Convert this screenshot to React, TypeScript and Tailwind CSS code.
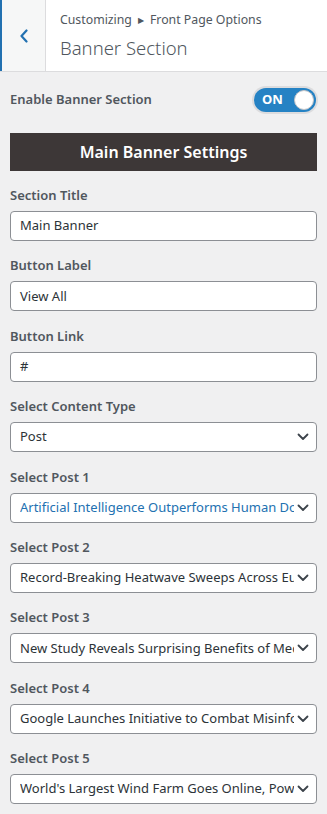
import React from "react";

const font = { fontFamily: '"Noto Sans", "Open Sans", sans-serif' };

function Chevron() {
  return (
    <svg width="12" height="8" viewBox="0 0 12 8" className="shrink-0">
      <path d="M1.5 1.5 L6 6 L10.5 1.5" fill="none" stroke="#3c434a" strokeWidth="1.8" strokeLinecap="round" strokeLinejoin="round" />
    </svg>
  );
}

function TextField({ label, value }: { label: string; value: string }) {
  return (
    <div className="flex flex-col gap-[6px]">
      <div className="h-[20px] leading-[20px] text-[13px] font-semibold text-[#50575e]">{label}</div>
      <div className="h-[30px] rounded-[4px] border border-[#8c8f94] bg-white px-[9px] flex items-center text-[13px] text-[#2c3338] whitespace-nowrap overflow-hidden">
        {value}
      </div>
    </div>
  );
}

function SelectField({ label, value, blue }: { label: string; value: string; blue?: boolean }) {
  return (
    <div className="flex flex-col gap-[6px]">
      <div className="h-[20px] leading-[20px] text-[13px] font-semibold text-[#50575e]">{label}</div>
      <div className="h-[30px] rounded-[4px] border border-[#8c8f94] bg-white pl-[9px] pr-[7px] flex items-center gap-[3px]">
        <div className={`flex-1 overflow-hidden whitespace-nowrap text-[13px] ${blue ? "text-[#2271b1]" : "text-[#2c3338]"}`}>{value}</div>
        <Chevron />
      </div>
    </div>
  );
}

export default function App() {
  return (
    <div className="w-[327px] min-h-[814px] bg-[#f0f0f1]" style={font}>
      <div className="h-[72px] flex bg-white border-b border-[#dcdcde]">
        <div className="w-[46px] h-full bg-[#f6f7f7] border-l-[2px] border-[#2271b1] border-r border-r-[#dcdcde] flex items-center justify-center">
          <svg width="10" height="14" viewBox="0 0 10 14">
            <path d="M7.5 1.5 L2.5 7 L7.5 12.5" fill="none" stroke="#2271b1" strokeWidth="2.2" strokeLinecap="round" strokeLinejoin="round" />
          </svg>
        </div>
        <div className="flex flex-col pl-[14px] pt-[10px]">
          <div className="h-[20px] leading-[20px] text-[12.3px] text-[#50575e] flex items-center">
            Customizing <span className="text-[8px] mx-[6px]">▶</span> Front Page Options
          </div>
          <div className="mt-[5px] h-[26px] leading-[26px] text-[18.5px] font-light text-[#50575e]">Banner Section</div>
        </div>
      </div>
      <div className="px-[10px] pt-[16px] pb-[10px] flex flex-col">
        <div className="h-[24px] flex items-center justify-between">
          <div className="text-[13px] font-semibold text-[#50575e]">Enable Banner Section</div>
          <div className="mr-[1px] w-[62px] h-[24px] rounded-full bg-[#2582c4] shadow-[0_0_0_2px_#dcdcde] flex items-center justify-between pl-[8px] pr-[2px]">
            <span className="text-white text-[13px] font-bold">ON</span>
            <span className="w-[20px] h-[20px] rounded-full bg-white border border-[#c3c4c7]" />
          </div>
        </div>
        <div className="mt-[21px] h-[38px] bg-[#3d3737] flex items-center justify-center text-white text-[16px] font-semibold">
          Main Banner Settings
        </div>
        <div className="mt-[14px] flex flex-col gap-[14.4px]">
          <TextField label="Section Title" value="Main Banner" />
          <TextField label="Button Label" value="View All" />
          <TextField label="Button Link" value="#" />
          <SelectField label="Select Content Type" value="Post" />
          <SelectField label="Select Post 1" value="Artificial Intelligence Outperforms Human Doctors" blue />
          <SelectField label="Select Post 2" value="Record-Breaking Heatwave Sweeps Across Europe" />
          <SelectField label="Select Post 3" value="New Study Reveals Surprising Benefits of Meditation" />
          <SelectField label="Select Post 4" value="Google Launches Initiative to Combat Misinformation" />
          <SelectField label="Select Post 5" value="World's Largest Wind Farm Goes Online, Powering Millions" />
        </div>
      </div>
    </div>
  );
}
